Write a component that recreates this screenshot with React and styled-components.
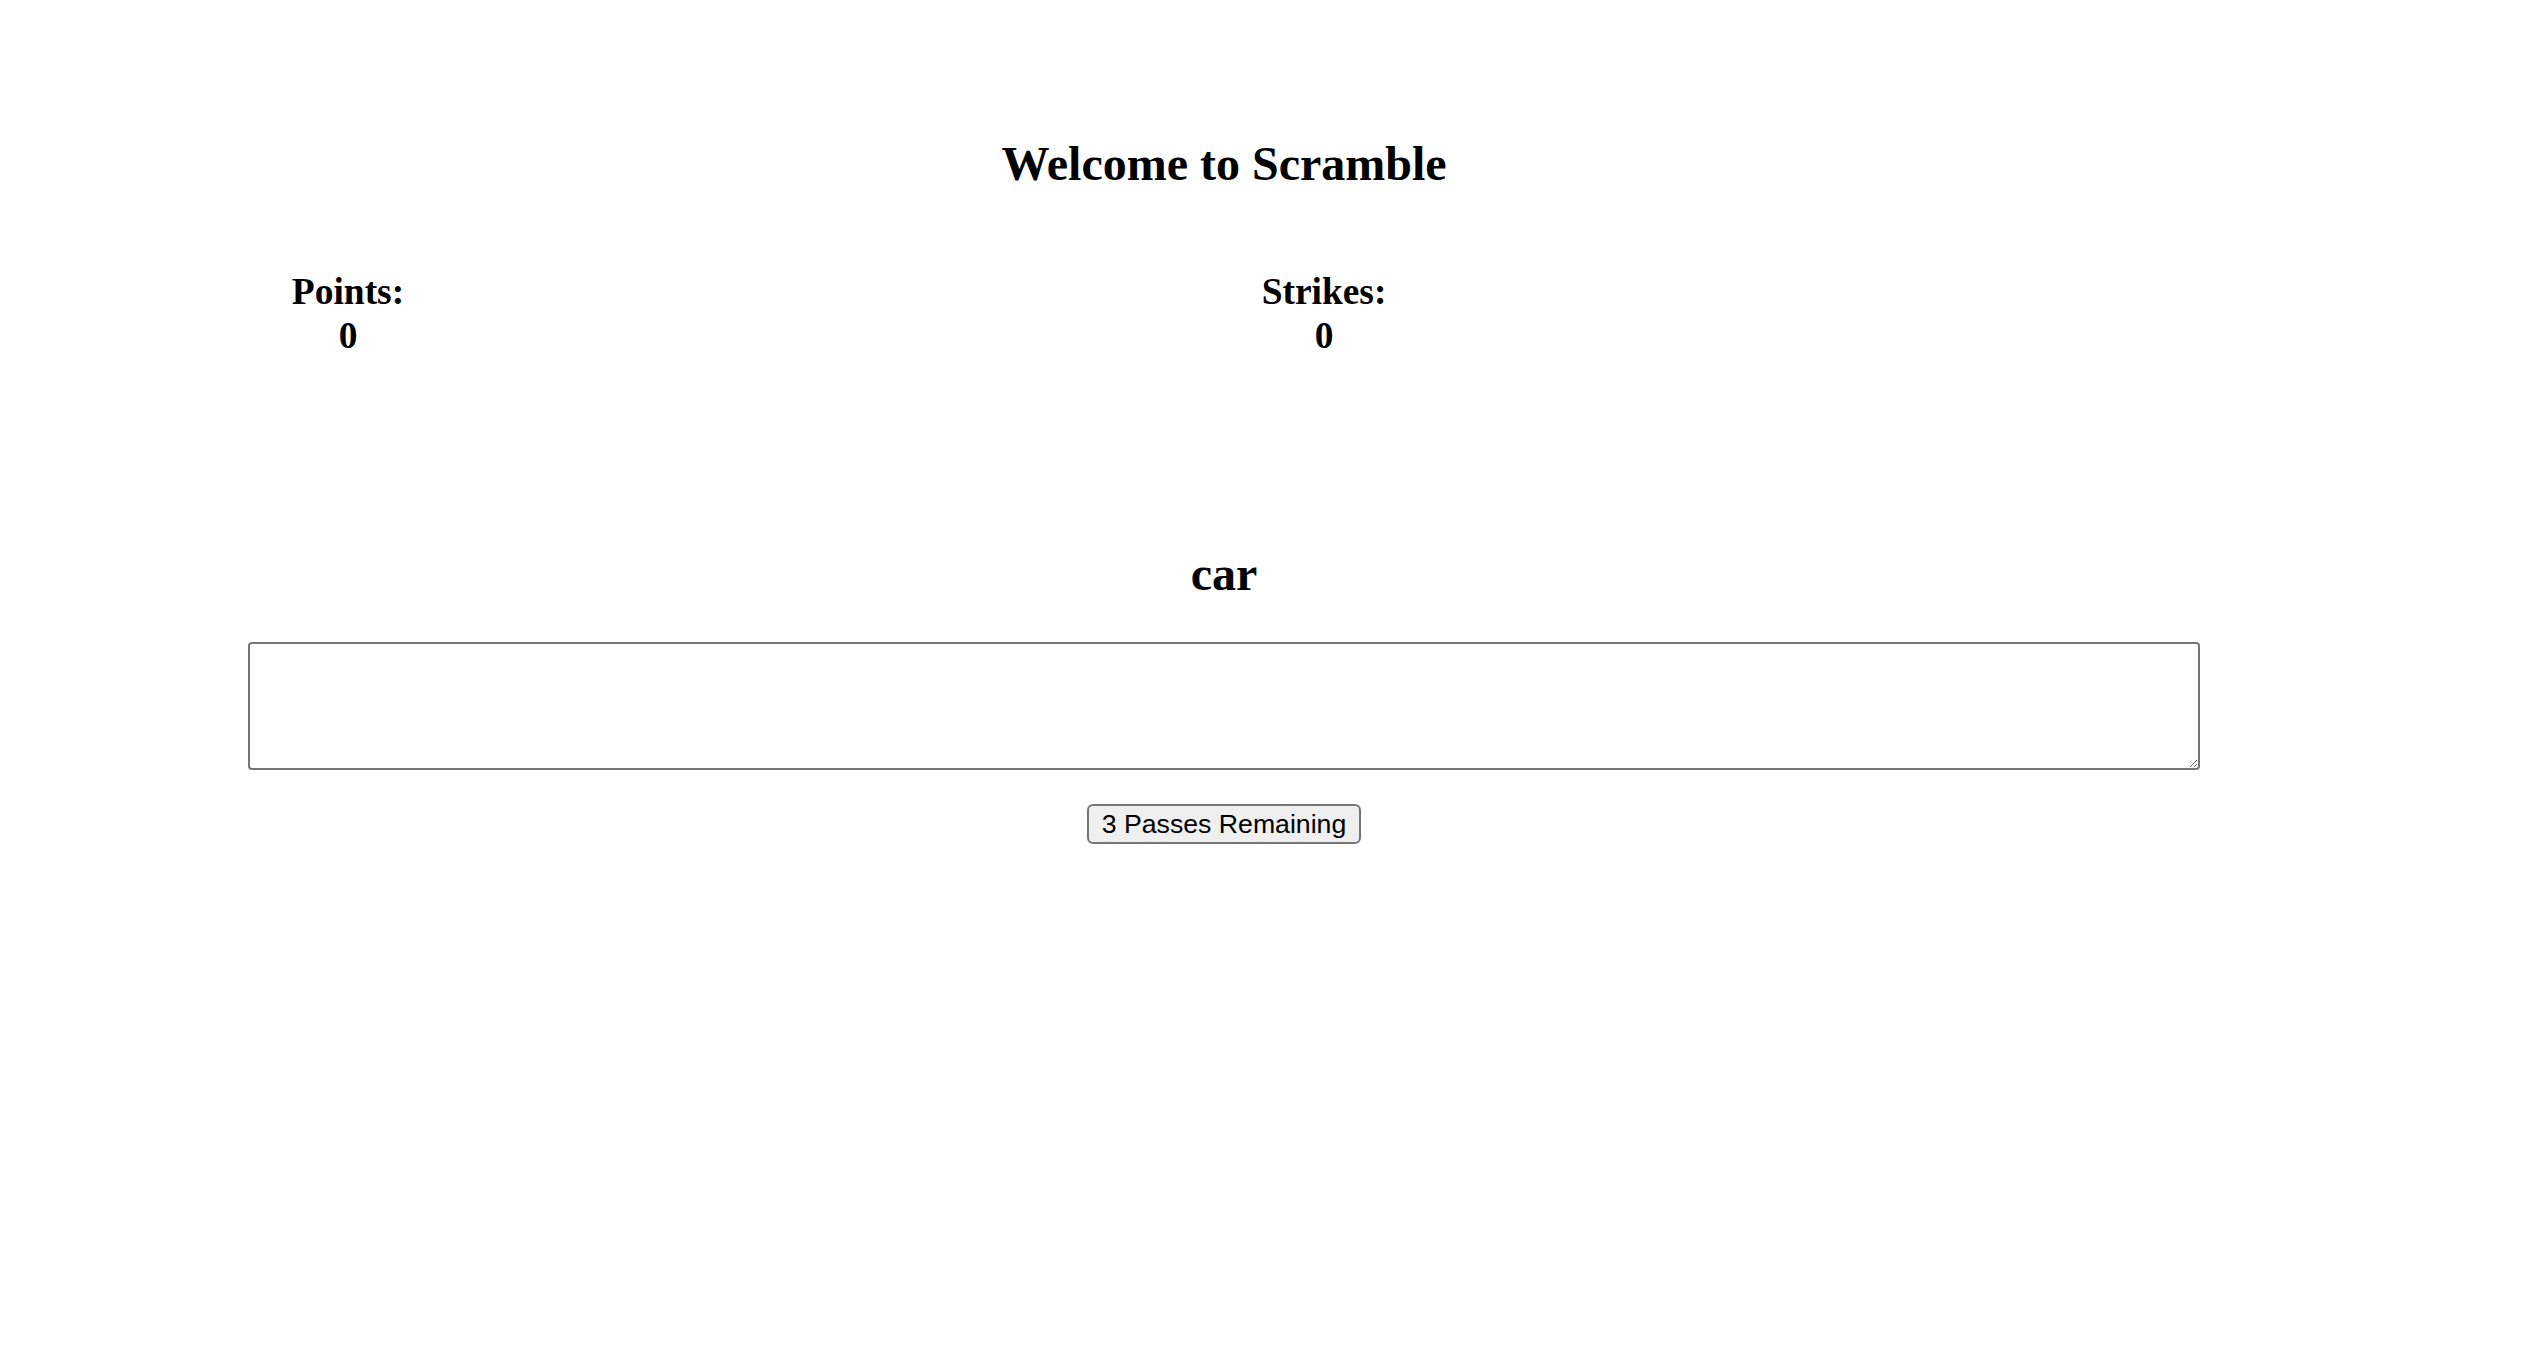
import styled, { createGlobalStyle } from "styled-components";

const GlobalStyle = createGlobalStyle`
  html, body {
    margin: 0;
    padding: 0;
    background: #fff;
  }
  body {
    font-family: "Liberation Serif", "Times New Roman", serif;
    color: #000;
  }
`;

const Jogo = styled.main`
  width: 1952px;
  margin-left: 248px;
  display: flex;
  flex-direction: column;
  align-items: center;
`;

const Titulo = styled.h1`
  margin: 136px 0 0;
  font-size: 48px;
  line-height: 56px;
  font-weight: bold;
  text-align: center;
`;

const Placar = styled.section`
  width: 100%;
  margin-top: 78px;
  display: grid;
  grid-template-columns: 1fr 1fr;
`;

const Estatistica = styled.h3`
  width: 200px;
  margin: 0;
  font-size: 37.44px;
  line-height: 44px;
  font-weight: bold;
  text-align: center;
`;

const Palavra = styled.h2`
  margin: 188px 0 0;
  font-size: 48px;
  line-height: 56px;
  font-weight: bold;
`;

const Resposta = styled.textarea`
  box-sizing: border-box;
  width: 100%;
  height: 128px;
  margin-top: 40px;
  border: 2px solid #767676;
  border-radius: 4px;
  padding: 4px;
  font-family: "Liberation Mono", monospace;
  font-size: 26px;
  background: #fff;
  outline: none;
`;

const BotaoPassar = styled.button`
  margin-top: 34px;
  height: 40px;
  padding: 0 13px;
  border: 2px solid #767676;
  border-radius: 6px;
  background: #efefef;
  color: #000;
  font-family: "Liberation Sans", Arial, sans-serif;
  font-size: 26.67px;
  line-height: 36px;
  cursor: pointer;
`;

function App() {
  const pontos = 0;
  const erros = 0;
  const passes = 3;

  return (
    <>
      <GlobalStyle />
      <Jogo>
        <Titulo>Welcome to Scramble</Titulo>
        <Placar>
          <Estatistica>
            Points:
            <br />
            {pontos}
          </Estatistica>
          <Estatistica>
            Strikes:
            <br />
            {erros}
          </Estatistica>
        </Placar>
        <Palavra>car</Palavra>
        <Resposta />
        <BotaoPassar>{passes} Passes Remaining</BotaoPassar>
      </Jogo>
    </>
  );
}

export default App;
